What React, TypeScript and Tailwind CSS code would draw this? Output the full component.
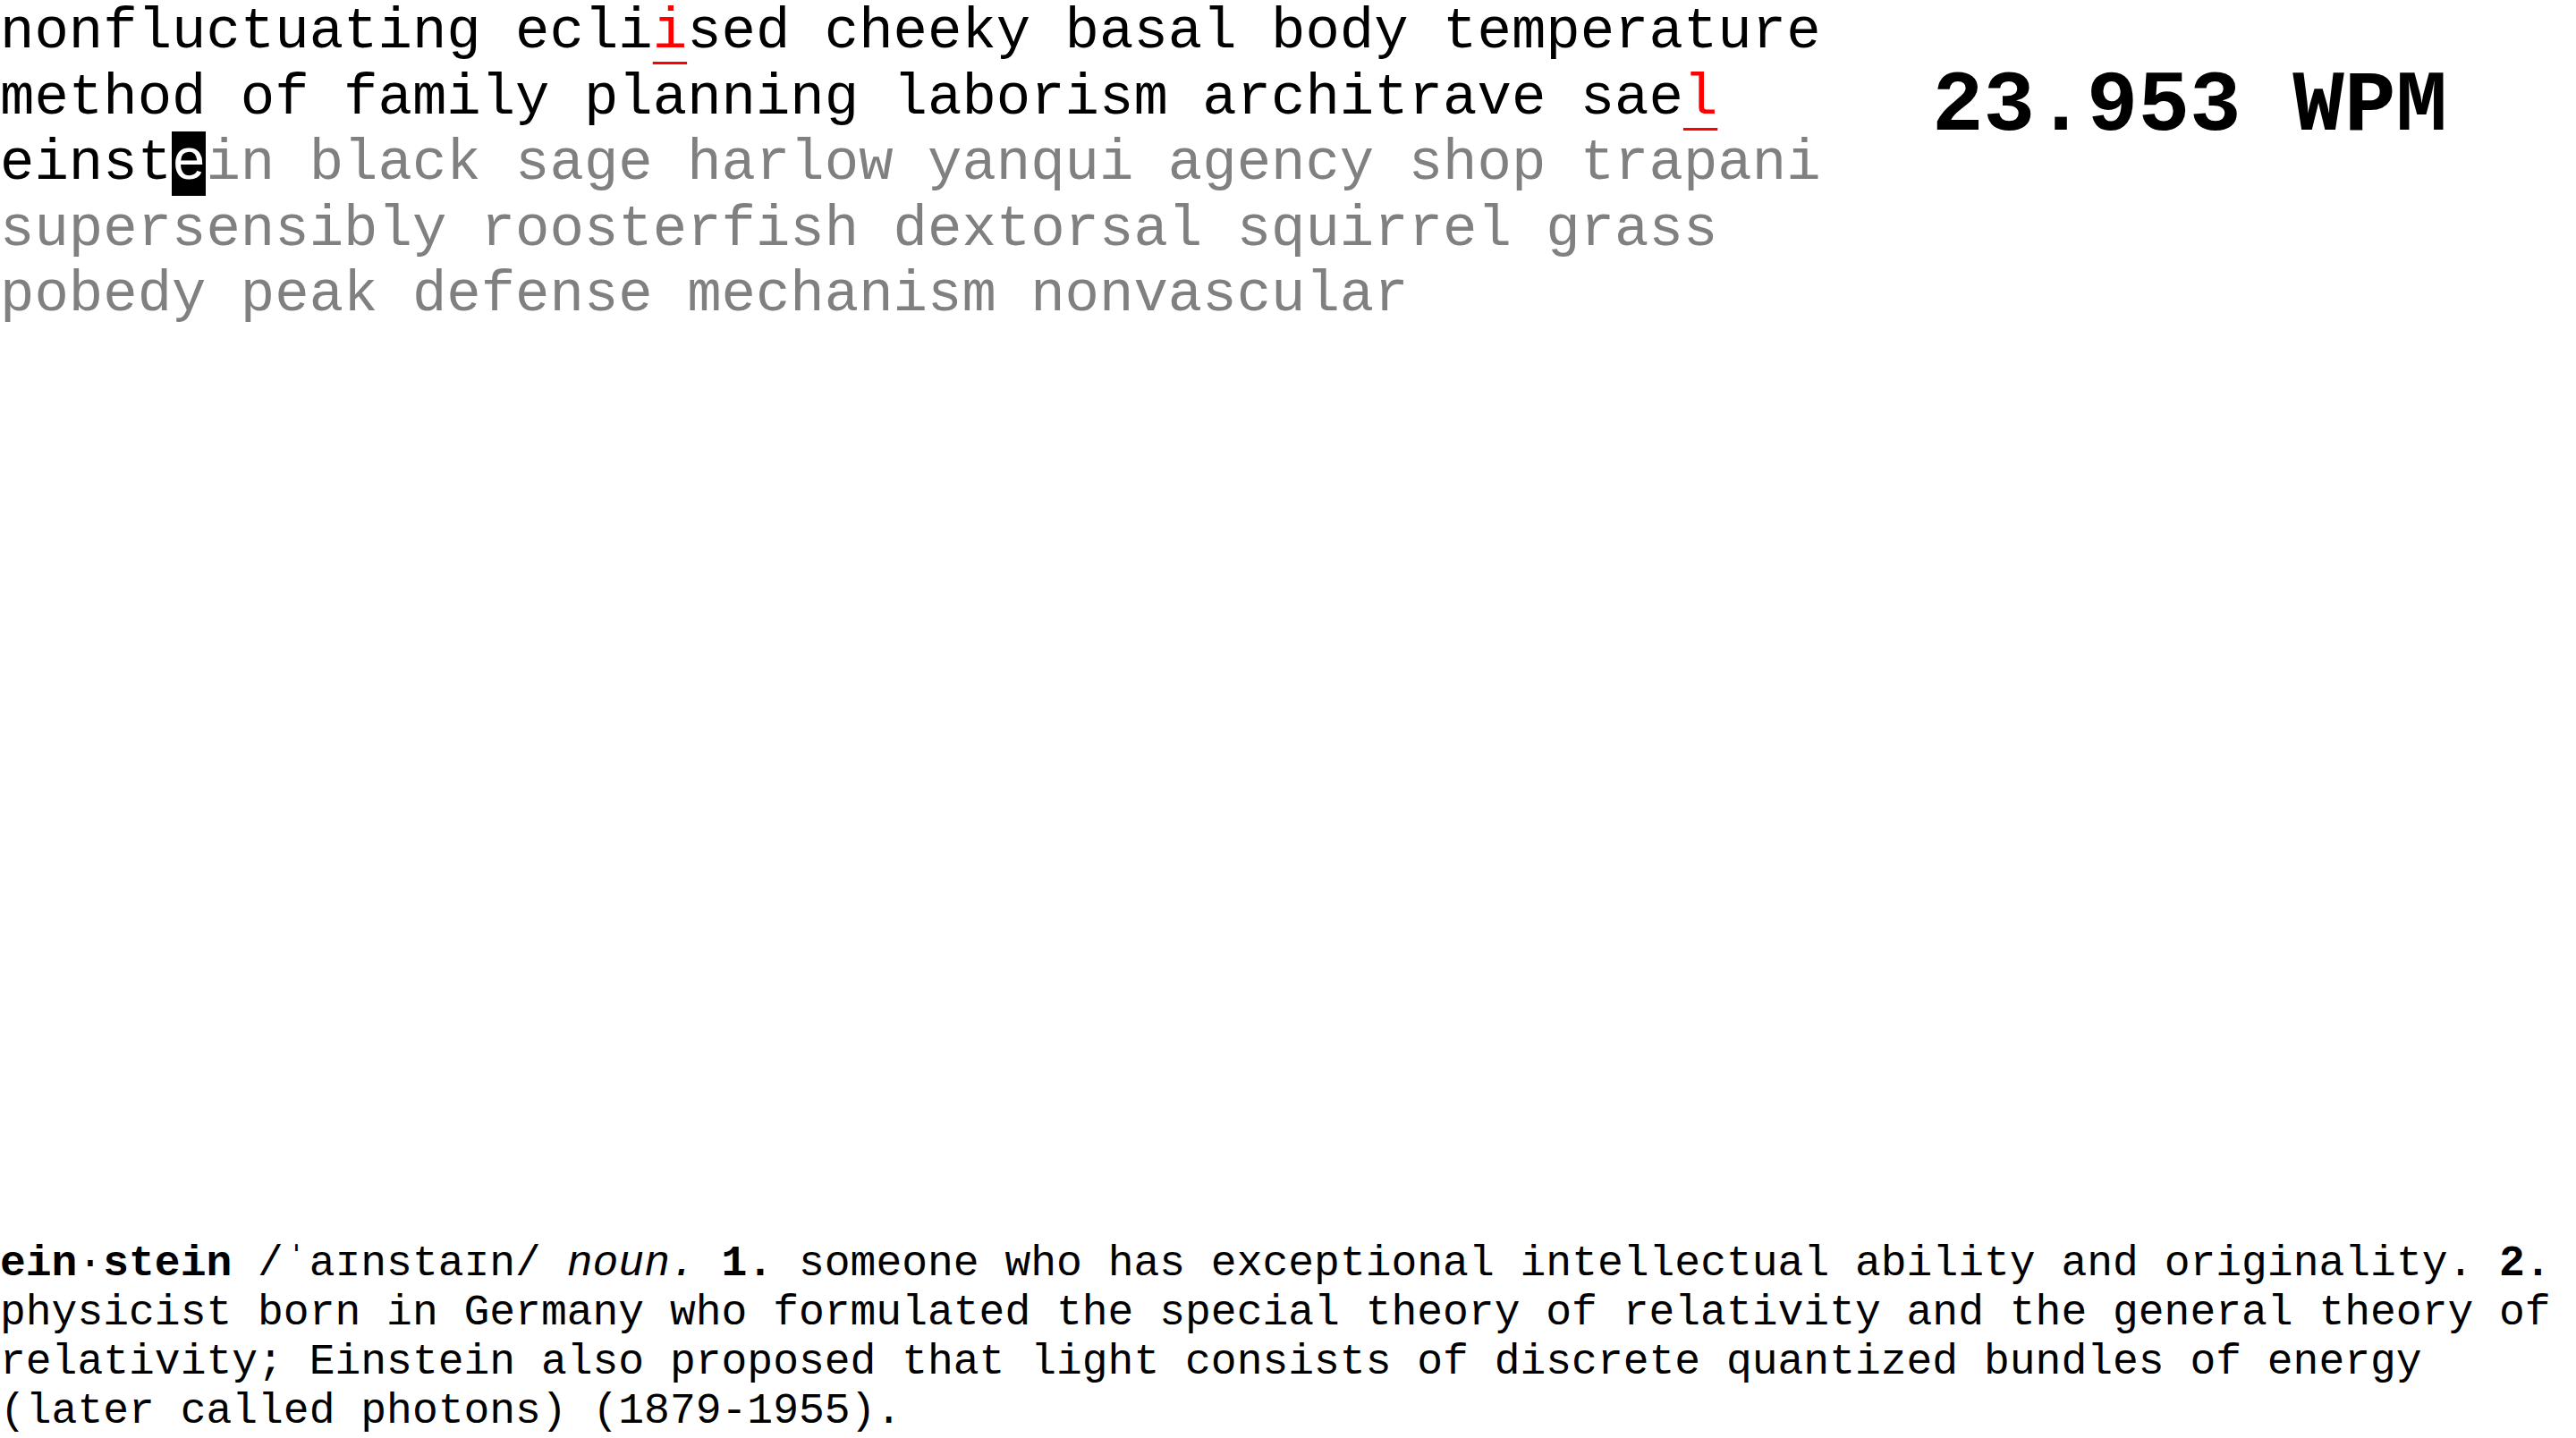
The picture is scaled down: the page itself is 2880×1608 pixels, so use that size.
import React from 'react';

type Chunk = { text: string; kind: 'typed' | 'wrong' | 'cursor' | 'pending' };

// typed text so far, with the mistakes marked in red
const chunks: Chunk[] = [
  { text: 'nonfluctuating ecli', kind: 'typed' },
  { text: 'i', kind: 'wrong' },
  { text: 'sed cheeky basal body temperature method of family planning laborism architrave sae', kind: 'typed' },
  { text: 'l', kind: 'wrong' },
  { text: ' einst', kind: 'typed' },
  { text: 'e', kind: 'cursor' },
  {
    text: 'in black sage harlow yanqui agency shop trapani supersensibly roosterfish dextorsal squirrel grass pobedy peak defense mechanism nonvascular',
    kind: 'pending',
  },
];

const chunkClass: Record<Chunk['kind'], string> = {
  typed: 'text-black',
  wrong: 'text-[#ff0000] underline decoration-[#ff0000] decoration-[3px] underline-offset-[16px]',
  cursor: 'bg-black text-white',
  pending: 'text-[#808080]',
};

const App: React.FC = () => {
  return (
    <div className="h-screen w-full bg-white flex flex-col overflow-hidden font-['Liberation_Mono','Courier_New',monospace] text-black">
      <div className="flex w-full">
        <div className="w-3/4 text-[64px] leading-[73.5px]">
          {chunks.map((c, i) => (
            <span key={i} className={chunkClass[c.kind]}>
              {c.text}
            </span>
          ))}
        </div>

        <div className="w-1/4 pt-[65px]">
          <div className="text-[96px] font-bold leading-[normal] whitespace-nowrap">23.953 WPM</div>
        </div>
      </div>

      {/* dictionary entry for the current word */}
      <div className="mt-auto pb-[2px] text-[48px] leading-[55px]">
        <span className="font-bold">ein</span>
        <span>·</span>
        <span className="font-bold">stein</span> /ˈaɪnstaɪn/ <span className="italic">noun.</span>{' '}
        <span className="font-bold">1.</span> someone who has exceptional intellectual ability and originality.{' '}
        <span className="font-bold">2.</span> physicist born in Germany who formulated the special theory of
        relativity and the general theory of relativity; Einstein also proposed that light consists of discrete
        quantized bundles of energy (later called photons) (1879-1955).
      </div>
    </div>
  );
};

export default App;
